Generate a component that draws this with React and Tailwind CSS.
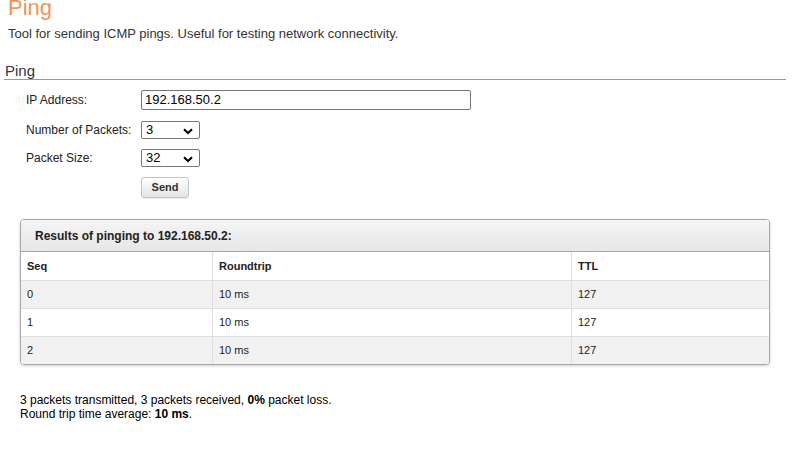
import React from "react";

const rows = [
  ["0", "10 ms", "127"],
  ["1", "10 ms", "127"],
  ["2", "10 ms", "127"],
];

function Chevron() {
  return (
    <svg width="10" height="7" viewBox="0 0 10 7" className="absolute right-[6px] top-[6px]">
      <path d="M1 1.2 L5 5 L9 1.2" stroke="#000" strokeWidth="2" fill="none" />
    </svg>
  );
}

function Select({ value }) {
  return (
    <div className="relative w-[59px] h-[18px] border border-[#767676] rounded-[2px] bg-white text-[13px] leading-[16px] pl-[4px] text-black">
      {value}
      <Chevron />
    </div>
  );
}

export default function App() {
  return (
    <div className="w-[800px] h-[457px] overflow-hidden bg-white text-[#222]" style={{ fontFamily: '"Liberation Sans", Arial, sans-serif' }}>
      <div className="pl-[8px] mt-[-4px] text-[22px] leading-[24px] text-[#f0945a]">Ping</div>
      <div className="pl-[8px] mt-[6px] text-[13px] leading-[15px] text-[#333]">
        Tool for sending ICMP pings. Useful for testing network connectivity.
      </div>
      <div className="ml-[4px] mr-[14px] mt-[21px] border-b border-[#9a9a9a] text-[15px] leading-[17px] text-[#333] pl-[1px]">Ping</div>

      <div className="mt-[10px] pl-[26px] text-[12px] text-[#222]">
        <div className="flex items-center h-[20px]">
          <div className="w-[115px]">IP Address:</div>
          <div className="w-[330px] h-[20px] border border-[#767676] rounded-[2px] text-[13px] leading-[18px] pl-[3px] text-black">192.168.50.2</div>
        </div>
        <div className="flex items-center h-[18px] mt-[11px]">
          <div className="w-[115px]">Number of Packets:</div>
          <Select value="3" />
        </div>
        <div className="flex items-center h-[18px] mt-[10px]">
          <div className="w-[115px]">Packet Size:</div>
          <Select value="32" />
        </div>
        <div className="flex mt-[10px]">
          <div className="w-[115px]" />
          <div className="w-[48px] h-[21px] border border-[#c4c4c4] rounded-[3px] bg-gradient-to-b from-[#ffffff] to-[#e4e4e4] text-[11px] font-bold text-[#333] flex items-center justify-center shadow-[0_1px_1px_rgba(0,0,0,0.08)]">
            Send
          </div>
        </div>
      </div>

      <div className="ml-[20px] mt-[21px] w-[750px] border border-[#a8a8a8] rounded-[4px] shadow-[0_1px_3px_rgba(0,0,0,0.2)] overflow-hidden">
        <div className="h-[32px] bg-gradient-to-b from-[#f5f5f5] to-[#e6e6e6] border-b border-[#a8a8a8] pl-[14px] flex items-center text-[12px] font-bold text-[#222]">
          Results of pinging to 192.168.50.2:
        </div>
        <div className="text-[11px] text-[#222]">
          <div className="flex h-[28px] bg-white font-bold">
            <div className="w-[192px] pl-[6px] flex items-center border-r border-[#dedede]">Seq</div>
            <div className="w-[359px] pl-[6px] flex items-center border-r border-[#dedede]">Roundtrip</div>
            <div className="flex-1 pl-[6px] flex items-center">TTL</div>
          </div>
          {rows.map((r, i) => (
            <div key={i} className={`flex h-[28px] border-t border-[#dedede] ${i % 2 === 0 ? "bg-[#f1f1f1]" : "bg-white"}`}>
              <div className="w-[192px] pl-[6px] flex items-center border-r border-[#dedede]">{r[0]}</div>
              <div className="w-[359px] pl-[6px] flex items-center border-r border-[#dedede]">{r[1]}</div>
              <div className="flex-1 pl-[6px] flex items-center">{r[2]}</div>
            </div>
          ))}
        </div>
      </div>

      <div className="ml-[20px] mt-[28px] text-[12px] leading-[14px] text-black">
        <div>3 packets transmitted, 3 packets received, <b>0%</b> packet loss.</div>
        <div>Round trip time average: <b>10 ms</b>.</div>
      </div>
    </div>
  );
}
